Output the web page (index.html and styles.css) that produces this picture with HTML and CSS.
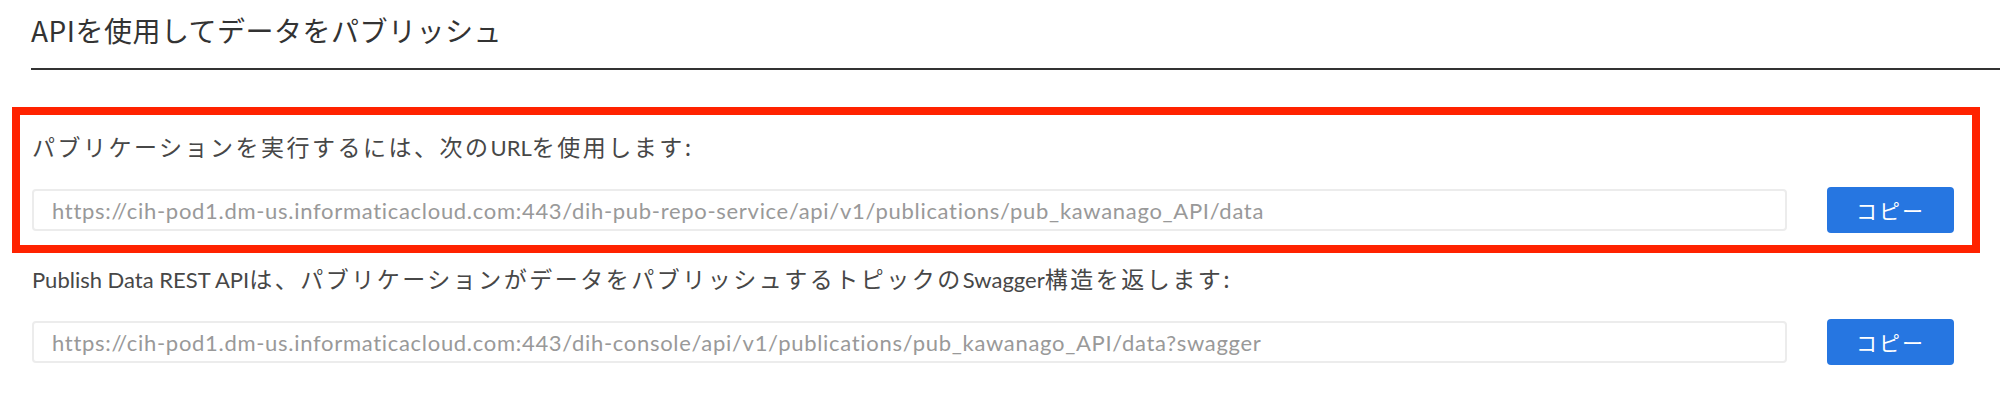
FILE: index.html
```html
<!DOCTYPE html>
<html lang="ja">
<head>
  <meta charset="UTF-8" />
  <title>APIを使用してデータをパブリッシュ</title>
  <link rel="stylesheet" href="styles.css">
</head>
<body>
  <div class="page">
    <div class="title-bar">
      <h2 class="title">APIを使用してデータをパブリッシュ</h2>
    </div>

    <div class="content">
      <div class="highlight">
        <div class="field">
          <label class="field-label">パブリケーションを実行するには、次の<span class="latin">URL</span>を使用します:</label>
          <div class="field-row">
            <input class="url-input" type="text" readonly
              placeholder="https://cih-pod1.dm-us.informaticacloud.com:443/dih-pub-repo-service/api/v1/publications/pub_kawanago_API/data">
            <button class="copy-btn">コピー</button>
          </div>
        </div>
      </div>

      <div class="field field-plain">
        <label class="field-label"><span class="latin">Publish Data REST API</span>は、パブリケーションがデータをパブリッシュするトピックの<span class="latin">Swagger</span>構造を返します:</label>
        <div class="field-row">
          <input class="url-input" type="text" readonly
            placeholder="https://cih-pod1.dm-us.informaticacloud.com:443/dih-console/api/v1/publications/pub_kawanago_API/data?swagger">
          <button class="copy-btn">コピー</button>
        </div>
      </div>
    </div>
  </div>
</body>
</html>
```

FILE: styles.css
```css
body {
  margin: 0;
  background: #fff;
  font-family: Lato, "Noto Sans CJK JP", sans-serif;
  color: #333;
}

.page {
  width: 2000px;
  height: 414px;
  overflow: hidden;
}

.title-bar {
  margin-left: 31px;
  border-bottom: 2px solid #333;
  height: 68px;
}

.title {
  margin: 0;
  padding-top: 10px;
  font-family: "Noto Sans CJK JP", sans-serif;
  font-size: 28px;
  font-weight: 400;
  letter-spacing: 0.5px;
  color: #333;
  line-height: 40px;
}

.content {
  padding: 37px 46px 0 32px;
}

.highlight {
  margin: 0 -26px 0 -20px;
  border: 8px solid #ff2200;
  padding: 14px 18px 12px 12px;
}

.field-label {
  display: block;
  font-family: "Noto Sans CJK JP", sans-serif;
  font-size: 23px;
  letter-spacing: 2.5px;
  color: #474747;
  line-height: 34px;
}

.field-label .latin {
  font-family: Lato, sans-serif;
  font-size: 22px;
  letter-spacing: 0;
}

.field-row {
  display: flex;
  align-items: center;
  gap: 40px;
  margin-top: 22px;
}

.url-input {
  flex: 1;
  height: 42px;
  box-sizing: border-box;
  border: 2px solid #ececec;
  border-radius: 4px;
  padding: 0 18px;
  font-family: Lato, sans-serif;
  font-size: 22px;
  letter-spacing: 0.7px;
  background: #fff;
  outline: none;
}

.url-input::placeholder {
  color: #999;
}

.copy-btn {
  width: 127px;
  height: 46px;
  border: none;
  border-radius: 4px;
  background: #2676e1;
  color: #fff;
  font-family: "Noto Sans CJK JP", sans-serif;
  font-size: 21px;
  letter-spacing: 2px;
  cursor: pointer;
}

.field-plain {
  padding-top: 8px;
}
```
